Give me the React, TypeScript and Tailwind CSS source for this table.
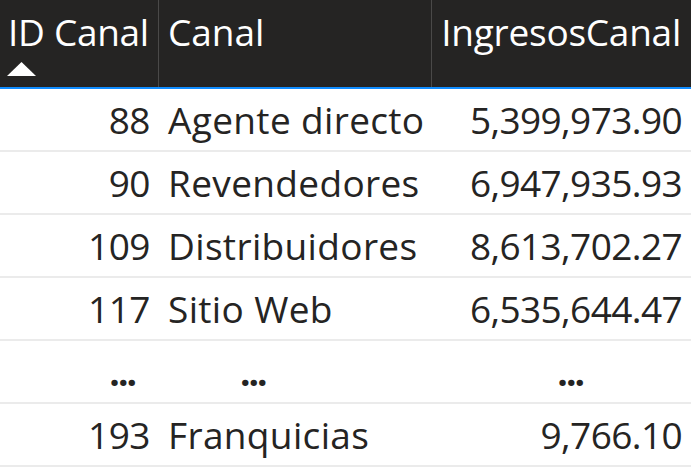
import React from 'react';

type Row = { id: string; canal: string; ingresos: string };

const rows: Row[] = [
    { id: '88', canal: 'Agente directo', ingresos: '5,399,973.90' },
    { id: '90', canal: 'Revendedores', ingresos: '6,947,935.93' },
    { id: '109', canal: 'Distribuidores', ingresos: '8,613,702.27' },
    { id: '117', canal: 'Sitio Web', ingresos: '6,535,644.47' },
];

const rowClass = 'grid grid-cols-[159px_273px_1fr] h-[63px] border-b-2 border-[#ebebeb] items-center';

const App: React.FC = () => {
    return (
        <div className="w-[691px] h-[470px] bg-white overflow-hidden font-['Segoe_UI','Open_Sans',sans-serif] text-[37px] text-[#252423]">
            {/* header */}
            <div className="grid grid-cols-[159px_273px_1fr] h-[89px] bg-[#252423] text-white border-b-2 border-[#118dff]">
                <div className="relative border-r border-[#4a4948] pl-[8px] pt-[10px] leading-[44px] whitespace-nowrap tracking-[-0.3px]">
                    ID Canal
                    <svg className="absolute left-[7px] top-[62px]" width="29" height="14" viewBox="0 0 29 14">
                        <polygon points="14.5,0 29,14 0,14" fill="#ffffff" />
                    </svg>
                </div>
                <div className="border-r border-[#4a4948] pl-[9px] pt-[10px] leading-[44px]">Canal</div>
                <div className="pr-[10px] pt-[10px] leading-[44px] text-right tracking-[-0.25px]">IngresosCanal</div>
            </div>

            {rows.map((r) => (
                <div key={r.id} className={rowClass}>
                    <div className="text-right pr-[9px] tracking-[-0.5px]">{r.id}</div>
                    <div className="pl-[9px] whitespace-nowrap tracking-[0.35px]">{r.canal}</div>
                    <div className="text-right pr-[9px] tracking-[-0.6px]">{r.ingresos}</div>
                </div>
            ))}

            <div className={rowClass}>
                <div className="text-right pr-[24px] font-bold tracking-[-2px]">...</div>
                <div className="pl-[81px] font-bold tracking-[-2px]">...</div>
                <div className="text-right pr-[108px] font-bold tracking-[-2px]">...</div>
            </div>

            <div className={rowClass}>
                <div className="text-right pr-[9px] tracking-[-0.5px]">193</div>
                <div className="pl-[9px] tracking-[0.35px]">Franquicias</div>
                <div className="text-right pr-[9px] tracking-[-0.6px]">9,766.10</div>
            </div>
        </div>
    );
};

export default App;
